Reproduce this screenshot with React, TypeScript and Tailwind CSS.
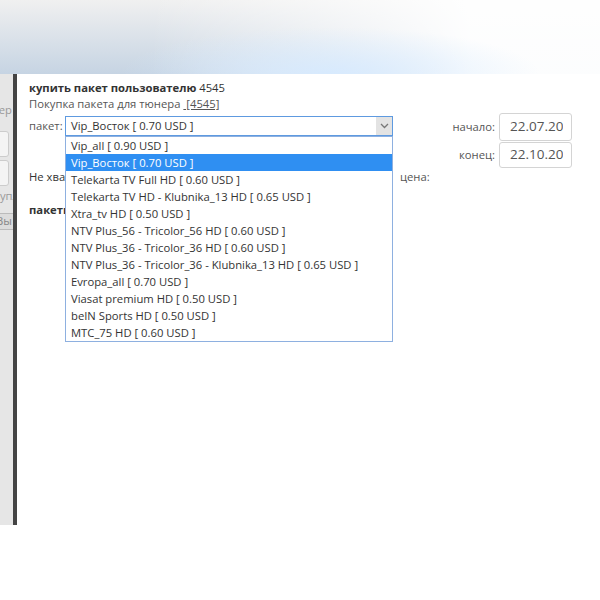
import { useState } from 'react';

const packages = [
  'Vip_all [ 0.90 USD ]',
  'Vip_Восток [ 0.70 USD ]',
  'Telekarta TV Full HD [ 0.60 USD ]',
  'Telekarta TV HD - Klubnika_13 HD [ 0.65 USD ]',
  'Xtra_tv HD [ 0.50 USD ]',
  'NTV Plus_56 - Tricolor_56 HD [ 0.60 USD ]',
  'NTV Plus_36 - Tricolor_36 HD [ 0.60 USD ]',
  'NTV Plus_36 - Tricolor_36 - Klubnika_13 HD [ 0.65 USD ]',
  'Evropa_all [ 0.70 USD ]',
  'Viasat premium HD [ 0.50 USD ]',
  'beIN Sports HD [ 0.50 USD ]',
  'MTC_75 HD [ 0.60 USD ]',
];

function DateBox({ value }: { value: string }) {
  return (
    <div className="w-[73px] h-full border border-[#d4d4d4] rounded-[3px] bg-white flex items-center pl-[10px]">
      <div className="w-[53px] overflow-hidden whitespace-nowrap text-[13.5px] text-[#555] leading-none">{value}</div>
    </div>
  );
}

export default function App() {
  const [selected, setSelected] = useState(1);

  return (
    <div className="w-[600px] h-[600px] bg-white overflow-hidden font-['Open_Sans',sans-serif] text-[11.25px] text-[#333]">
      {/* blurred header */}
      <div className="h-[74px] bg-[radial-gradient(ellipse_at_55%_100%,rgba(214,234,255,0.9),rgba(214,234,255,0)_45%),linear-gradient(to_right,rgba(255,255,255,0)_25%,rgba(255,255,255,0.95)_78%),linear-gradient(to_bottom,#f0f0f0,#c6d4e3)]" />

      <div className="flex h-[451px]">
        {/* clipped side panel */}
        <div className="w-[13px] bg-[#e6e6e6] overflow-hidden">
          <div className="w-[120px] -ml-[107px] flex flex-col items-end text-[#999]">
            <div className="mt-[28px] h-[16px] leading-[16px] pr-[1px]">Тюнер</div>
            <div className="mt-[13px] w-[100px] h-[26px] border border-[#ccc] bg-[#f4f4f4] rounded-[3px] mr-[4px]" />
            <div className="mt-[3px] w-[100px] h-[26px] border border-[#ccc] bg-[#f4f4f4] rounded-[3px] mr-[4px]" />
            <div className="mt-[2px] h-[16px] leading-[16px] -mr-[6px]">Купл</div>
            <div className="mt-[9px] w-[80px] h-[17px] border border-[#bbb] bg-[#dcdcdc] flex items-center justify-end pr-[2px] text-[#888] -mr-[2px]">Вы</div>
          </div>
        </div>
        <div className="w-[4px] bg-[#444]" />

        {/* main */}
        <div className="flex-1 pl-[12px] pt-[6px]">
          <div className="h-[16px] leading-[16px]">
            <span className="font-bold">купить пакет пользователю</span> 4545
          </div>
          <div className="h-[16px] leading-[16px] text-[#555]">
            Покупка пакета для тюнера <span className="underline">&nbsp;[4545]</span>
          </div>

          <div className="flex">
            <div className="w-[364px] flex flex-col">
              <div className="mt-[4px] flex items-center h-[20px]">
                <div className="w-[36px] text-[#555]">пакет:</div>
                <div className="relative w-[328px] h-[20px]">
                  <div className="h-full border border-[#5e9ae0] flex items-center bg-white">
                    <div className="flex-1 pl-[5px] leading-none">{packages[selected]}</div>
                    <div className="w-[16px] h-full bg-[#e3e3e3] flex items-center justify-center">
                      <svg width="9" height="6" viewBox="0 0 9 6" fill="none">
                        <path d="M1 1l3.5 3.5L8 1" stroke="#777" strokeWidth="1.3" />
                      </svg>
                    </div>
                  </div>
                  <ul className="absolute top-full left-0 w-[328px] bg-white border border-[#8eb0e0] z-10">
                    {packages.map((p, i) => (
                      <li
                        key={p}
                        onClick={() => setSelected(i)}
                        className={
                          i === selected
                            ? 'h-[17px] leading-[17px] pl-[5px] bg-[#2f8ff2] text-white'
                            : 'h-[17px] leading-[17px] pl-[5px] text-[#333]'
                        }
                      >
                        {p}
                      </li>
                    ))}
                  </ul>
                </div>
              </div>
              <div className="mt-[33px] h-[16px] leading-[16px]">Не хватает средств</div>
              <div className="mt-[17px] h-[16px] leading-[16px] font-bold">пакеты</div>
            </div>

            <div className="flex-1 flex flex-col pl-[7px] pr-[28px]">
              <div className="mt-[1px] h-[28px] flex items-center justify-end gap-[4px]">
                <span className="text-[#555]">начало:</span>
                <DateBox value="22.07.2022" />
              </div>
              <div className="mt-[1px] h-[26px] flex items-center justify-end gap-[4px]">
                <span className="text-[#555]">конец:</span>
                <DateBox value="22.10.2022" />
              </div>
              <div className="mt-[1px] h-[16px] leading-[16px] text-[#555]">цена:</div>
            </div>
          </div>
        </div>
      </div>
    </div>
  );
}
